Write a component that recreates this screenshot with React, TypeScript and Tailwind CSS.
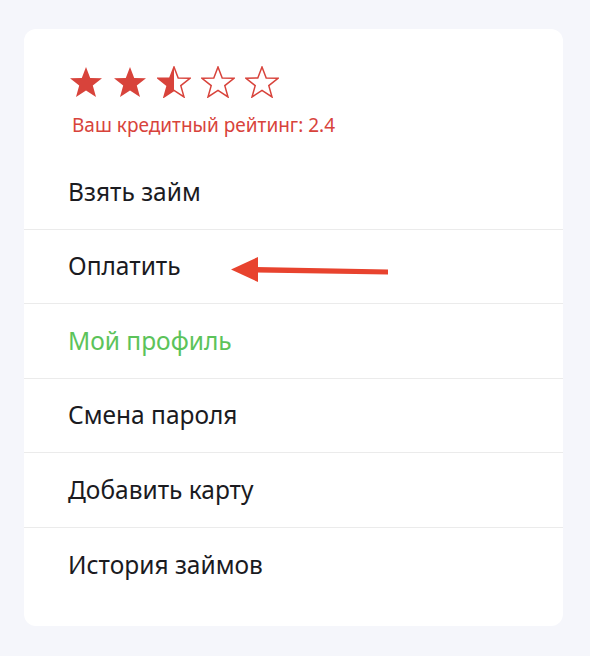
const menu = [
  { name: 'Взять займ' },
  { name: 'Оплатить', arrow: true },
  { name: 'Мой профиль', active: true },
  { name: 'Смена пароля' },
  { name: 'Добавить карту' },
  { name: 'История займов' },
]

function StarIcon({ fill }: { fill: 'full' | 'half' | 'empty' }) {
  const d =
    'M17 1 L21.2 12 L33 12.3 L23.8 19.6 L27 31 L17 24.4 L7 31 L10.2 19.6 L1 12.3 L12.8 12 Z'
  return (
    <svg width="34" height="32" viewBox="0 0 34 32">
      <defs>
        <clipPath id="half-star">
          <rect x="0" y="0" width="17" height="32" />
        </clipPath>
      </defs>
      {fill === 'full' && <path d={d} fill="#d8433b" />}
      {fill === 'half' && <path d={d} fill="#d8433b" clipPath="url(#half-star)" />}
      {fill !== 'full' && (
        <path d={d} fill="none" stroke="#d8433b" strokeWidth="1.5" strokeLinejoin="miter" />
      )}
    </svg>
  )
}

function Arrow() {
  return (
    <svg
      className="absolute left-[206px] top-[26px]"
      width="158"
      height="30"
      viewBox="0 0 158 30"
    >
      <path d="M26 11 L158 13.5 L158 18.5 L26 16.5 Z" fill="#e8432e" />
      <path d="M1 13.5 L28 1 L28 26 Z" fill="#e8432e" />
    </svg>
  )
}

export default function App() {
  return (
    <div
      className="min-h-screen bg-[#f5f6fb] pt-[29px] pb-[30px] px-[24px]"
      style={{ fontFamily: '"Noto Sans", "Open Sans", sans-serif' }}
    >
      <div className="bg-white rounded-[12px] w-[539px] h-[597px] flex flex-col">
        {/* Rating */}
        <div className="pl-[45px] pt-[37px]">
          <div className="flex gap-[10px]">
            <StarIcon fill="full" />
            <StarIcon fill="full" />
            <StarIcon fill="half" />
            <StarIcon fill="empty" />
            <StarIcon fill="empty" />
          </div>
          <div className="mt-[17px] ml-[3px] text-[19px] leading-[20px] text-[#d8433b]">
            Ваш кредитный рейтинг: 2.4
          </div>
        </div>

        {/* Menu */}
        <nav className="mt-[20px] flex flex-col">
          {menu.map((item, i) => (
            <div
              key={item.name}
              className={
                'relative h-[74.5px] flex items-center pl-[44px] ' +
                (i < menu.length - 1 ? 'border-b border-[#ebebeb]' : '')
              }
            >
              <span
                className={
                  'text-[24.5px] leading-none ' +
                  (item.active ? 'text-[#5cc35a]' : 'text-[#1b1b1f]')
                }
              >
                {item.name}
              </span>
              {item.arrow && <Arrow />}
            </div>
          ))}
        </nav>
      </div>
    </div>
  )
}
